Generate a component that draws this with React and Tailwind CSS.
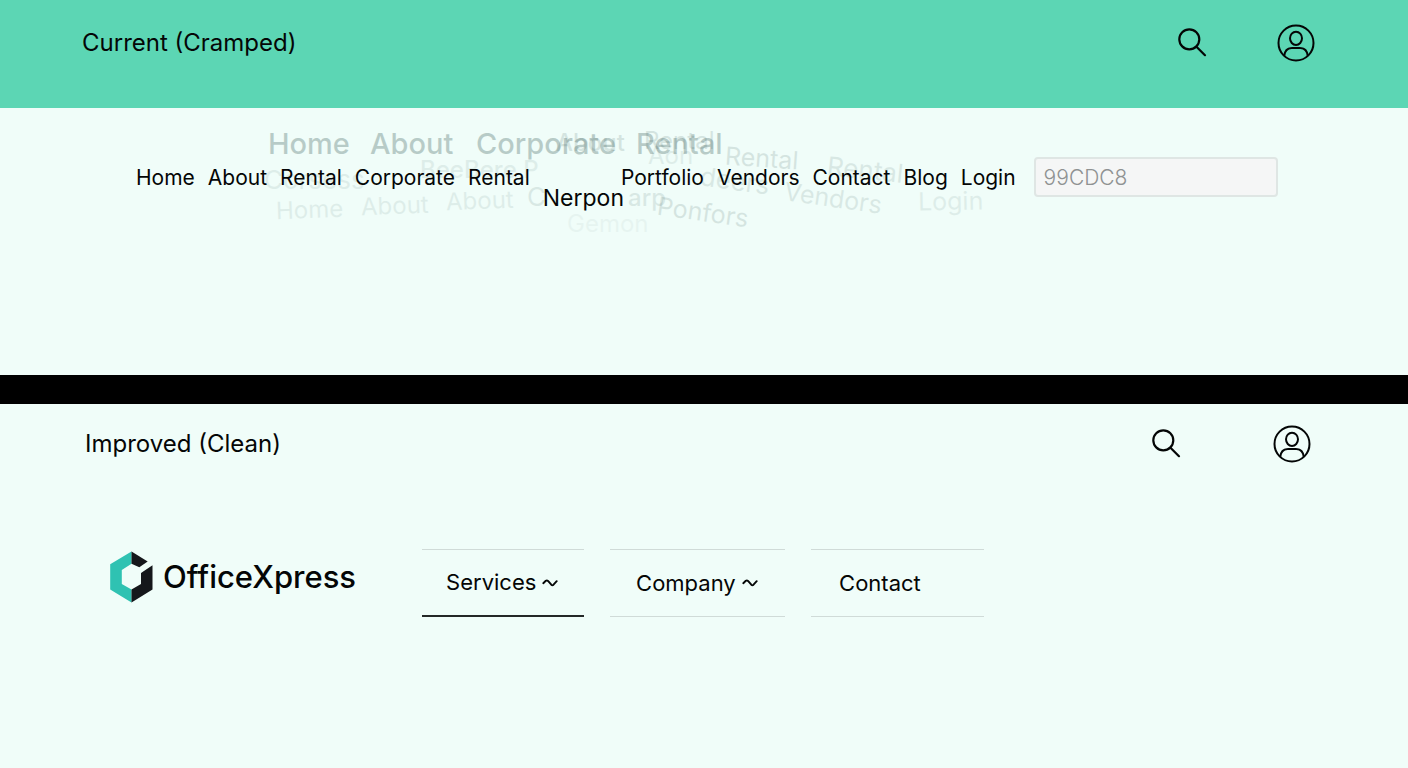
const ghosts = [
  { text: "Home", style: "left-[268px] top-[126px] text-[29px] font-medium opacity-25" },
  { text: "About", style: "left-[370px] top-[126px] text-[29px] font-medium opacity-25" },
  { text: "Corporate", style: "left-[476px] top-[126px] text-[29px] font-medium opacity-25" },
  { text: "Rental", style: "left-[636px] top-[126px] text-[29px] font-medium opacity-25" },
  { text: "About", style: "left-[556px] top-[125px] text-[24px] font-medium opacity-12" },
  { text: "Rental", style: "left-[644px] top-[123px] text-[24px] opacity-12" },
  { text: "Aon", style: "left-[648px] top-[138px] text-[24px] opacity-8" },
  { text: "Corsess", style: "left-[264px] top-[162px] text-[26px] opacity-8" },
  { text: "BeeBere P", style: "left-[420px] top-[152px] text-[24px] font-medium opacity-8" },
  { text: "Rental", style: "left-[725px] top-[140px] text-[25px] opacity-12 rotate-4" },
  { text: "Rental", style: "left-[827px] top-[152px] text-[26px] opacity-10 rotate-6" },
  { text: "deers", style: "left-[700px] top-[163px] text-[26px] opacity-10 rotate-8" },
  { text: "Home", style: "left-[276px] top-[192px] text-[24px] opacity-8 -rotate-2" },
  { text: "About", style: "left-[361px] top-[188px] text-[24px] opacity-8 -rotate-2" },
  { text: "About", style: "left-[446px] top-[183px] text-[24px] opacity-8 -rotate-2" },
  { text: "C", style: "left-[527px] top-[179px] text-[26px] opacity-10" },
  { text: "arp", style: "left-[628px] top-[180px] text-[24px] font-medium opacity-10" },
  { text: "Gemon", style: "left-[567px] top-[206px] text-[24px] opacity-4" },
  { text: "Ponfors", style: "left-[657px] top-[194px] text-[25px] opacity-12 rotate-8" },
  { text: "Vendors", style: "left-[784px] top-[180px] text-[25px] opacity-10 rotate-8" },
  { text: "Login", style: "left-[918px] top-[183px] text-[25px] opacity-8 -rotate-1" },
];

const crampedLinks = [
  { label: "Home" },
  { label: "About" },
  { label: "Rental" },
  { label: "Corporate" },
  { label: "Rental" },
  { label: "Nerpon", style: "mt-5 -mr-4 text-[23px]" },
  { label: "Portfolio" },
  { label: "Vendors" },
  { label: "Contact" },
  { label: "Blog" },
  { label: "Login" },
];

function SearchIcon() {
  return (
    <svg className="size-8" viewBox="0 0 32 32" fill="none" stroke="currentColor" strokeWidth="2.2" strokeLinecap="round" aria-hidden="true">
      <circle cx="13.3" cy="12.3" r="10" />
      <path d="M20.5 19.7 29 28.200" />
    </svg>
  );
}

function UserIcon() {
  return (
    <svg className="size-10" viewBox="0 0 40 40" fill="none" stroke="currentColor" strokeWidth="2" aria-hidden="true">
      <circle cx="20" cy="20" r="17.5" />
      <ellipse cx="20" cy="15.3" rx="6" ry="6.6" />
      <path d="M8.2 33C8.800 28 11.400 25.300 15.500 25.100Q20 24.700 24.500 25.100C28.600 25.300 31.200 28 31.800 33" />
    </svg>
  );
}

function Wave() {
  return (
    <svg className="h-3 w-4" viewBox="0 0 16 12" fill="none" stroke="currentColor" strokeWidth="1.9" strokeLinecap="round" strokeLinejoin="round" aria-hidden="true">
      <path d="M1.300 6.200 3.800 3.800Q4.900 3 6 3.900L9.300 7.700Q10.400 8.700 11.500 7.700L14.700 4.200" />
    </svg>
  );
}

function Logo() {
  return (
    <svg className="h-13 w-11" viewBox="0 0 44 52" aria-hidden="true">
      <path d="M22.500 .500 1.200 13.200V38.500L22.500 51.500V38.500L12.800 33V19L22.500 12.800Z" fill="#2fc2b2" />
      <path d="M22.500 .500 38.700 10.500 30.300 16.300 22.500 12.800Z" fill="#15171b" />
      <path d="M43.500 14.300V38.500L22.500 51.500V38.500L32 33V22Z" fill="#15171b" />
    </svg>
  );
}

function Actions({ gap }) {
  return (
    <div className={"flex items-center " + gap}>
      <button type="button" aria-label="Search"><SearchIcon /></button>
      <button type="button" aria-label="Account"><UserIcon /></button>
    </div>
  );
}

export default function App() {
  return (
    <div className="flex min-h-screen flex-col bg-[#f0fdf9] font-['Inter',sans-serif] text-[#040606]">
      <section className="relative">
        <header className="flex h-27 items-start justify-between bg-[#5cd6b4] pt-[23px] pr-23 pl-[82px]">
          <h2 className="text-2xl leading-10">Current (Cramped)</h2>
          <Actions gap="gap-17" />
        </header>
        <div aria-hidden="true" className="pointer-events-none text-[#123c38] select-none">
          {ghosts.map((ghost, i) => (
            <span key={i} className={"absolute leading-9 whitespace-nowrap " + ghost.style}>{ghost.text}</span>
          ))}
        </div>
        <div className="relative flex h-[267px] items-start pt-[49px] pl-34">
          <nav aria-label="Cramped navigation" className="flex items-start gap-[13px] text-[21px] leading-[42px]">
            {crampedLinks.map((link, i) => (
              <a key={i} href="#" className={link.style}>{link.label}</a>
            ))}
          </nav>
          <input
            type="text"
            aria-label="Search term"
            defaultValue="99CDC8"
            className="ml-[18px] h-10 w-61 rounded-sm border-2 border-[#dfe6e4] bg-[#f5f6f6] px-2 text-[21px] font-light text-[#8f9292] outline-none"
          />
        </div>
      </section>

      <div className="h-[29px] bg-black" />

      <section className="flex-1">
        <header className="flex items-start justify-between pt-5 pr-24 pl-[85px]">
          <h2 className="text-2xl leading-10">Improved (Clean)</h2>
          <Actions gap="gap-[90px]" />
        </header>
        <div className="mt-[84px] flex items-start pl-[109px]">
          <a href="#" className="mt-[3px] flex items-center gap-[10px] text-[31px] leading-13 font-medium">
            <Logo />
            <span>OfficeXpress</span>
          </a>
          <nav aria-label="Clean navigation" className="mt-px ml-[66px] flex gap-[26px] text-[22px]">
            <button type="button" className="flex h-17 w-[162px] items-center gap-[6px] border-t border-b-2 border-t-[#d0dbd8] border-b-[#242827] pl-6">
              Services <Wave />
            </button>
            <button type="button" className="flex h-17 w-[175px] items-center gap-[6px] border-y border-[#d0dbd8] pl-[26px]">
              Company <Wave />
            </button>
            <a href="#" className="flex h-17 w-[173px] items-center border-y border-[#d0dbd8] pl-7">Contact</a>
          </nav>
        </div>
      </section>
    </div>
  );
}
